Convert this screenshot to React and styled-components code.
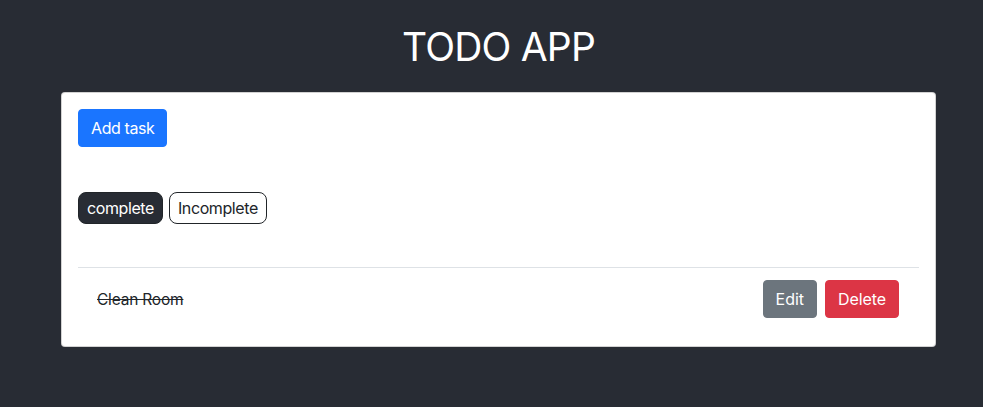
import React, { useState } from "react";
import styled, { createGlobalStyle } from "styled-components";

const GlobalStyle = createGlobalStyle`
  * { box-sizing: border-box; }
  body {
    margin: 0;
    background: #282c34;
    font-family: Inter, "Liberation Sans", sans-serif;
    color: #212529;
  }
`;

const Page = styled.div`
  min-height: 407px;
  padding: 24px 47px 40px 61px;
`;

const Title = styled.h1`
  margin: 0 0 22px;
  text-align: center;
  color: #fff;
  font-size: 39px;
  font-weight: 400;
  line-height: 46px;
  letter-spacing: -0.8px;
`;

const Card = styled.div`
  background: #fff;
  border: 1px solid rgba(0, 0, 0, 0.175);
  border-radius: 4px;
  padding: 16px 16px 28px;
`;

const Button = styled.button`
  font-family: inherit;
  font-size: 16px;
  line-height: 24px;
  letter-spacing: ${(p) => p.$spacing || "-0.4px"};
  padding: 6px 12px;
  border: 1px solid ${(p) => p.$bg};
  border-radius: 4px;
  background: ${(p) => p.$bg};
  color: #fff;
  cursor: pointer;
`;

const Filters = styled.div`
  display: flex;
  gap: 6px;
  margin: 45px 0 43px;
`;

const Chip = styled.button`
  font-family: inherit;
  font-size: 16px;
  line-height: 24px;
  letter-spacing: -0.4px;
  padding: 3px 8px;
  border-radius: 8px;
  border: 1px solid #212529;
  background: ${(p) => (p.$active ? "#282c34" : "#fff")};
  color: ${(p) => (p.$active ? "#fff" : "#212529")};
  cursor: pointer;
`;

const List = styled.div`
  border-top: 1px solid #dee2e6;
`;

const Row = styled.div`
  display: flex;
  align-items: center;
  justify-content: space-between;
  padding: 12px 20px 0 19px;
`;

const TaskName = styled.span`
  font-size: 15.5px;
  letter-spacing: -0.2px;
  text-decoration: ${(p) => (p.$done ? "line-through" : "none")};
  color: #212529;
`;

const Actions = styled.div`
  display: flex;
  gap: 8px;
`;

export default function App() {
  const [filter, setFilter] = useState("complete");
  const tasks = [{ id: 1, name: "Clean Room", done: true }];

  return (
    <>
      <GlobalStyle />
      <Page>
        <Title>TODO APP</Title>
        <Card>
          <Button $bg="#1a75ff">Add task</Button>
          <Filters>
            <Chip $active={filter === "complete"} onClick={() => setFilter("complete")}>
              complete
            </Chip>
            <Chip $active={filter === "incomplete"} onClick={() => setFilter("incomplete")}>
              Incomplete
            </Chip>
          </Filters>
          <List>
            {tasks.map((t) => (
              <Row key={t.id}>
                <TaskName $done={t.done}>{t.name}</TaskName>
                <Actions>
                  <Button $bg="#6c757d" $spacing="0">Edit</Button>
                  <Button $bg="#dc3545" $spacing="-0.1px">Delete</Button>
                </Actions>
              </Row>
            ))}
          </List>
        </Card>
      </Page>
    </>
  );
}
